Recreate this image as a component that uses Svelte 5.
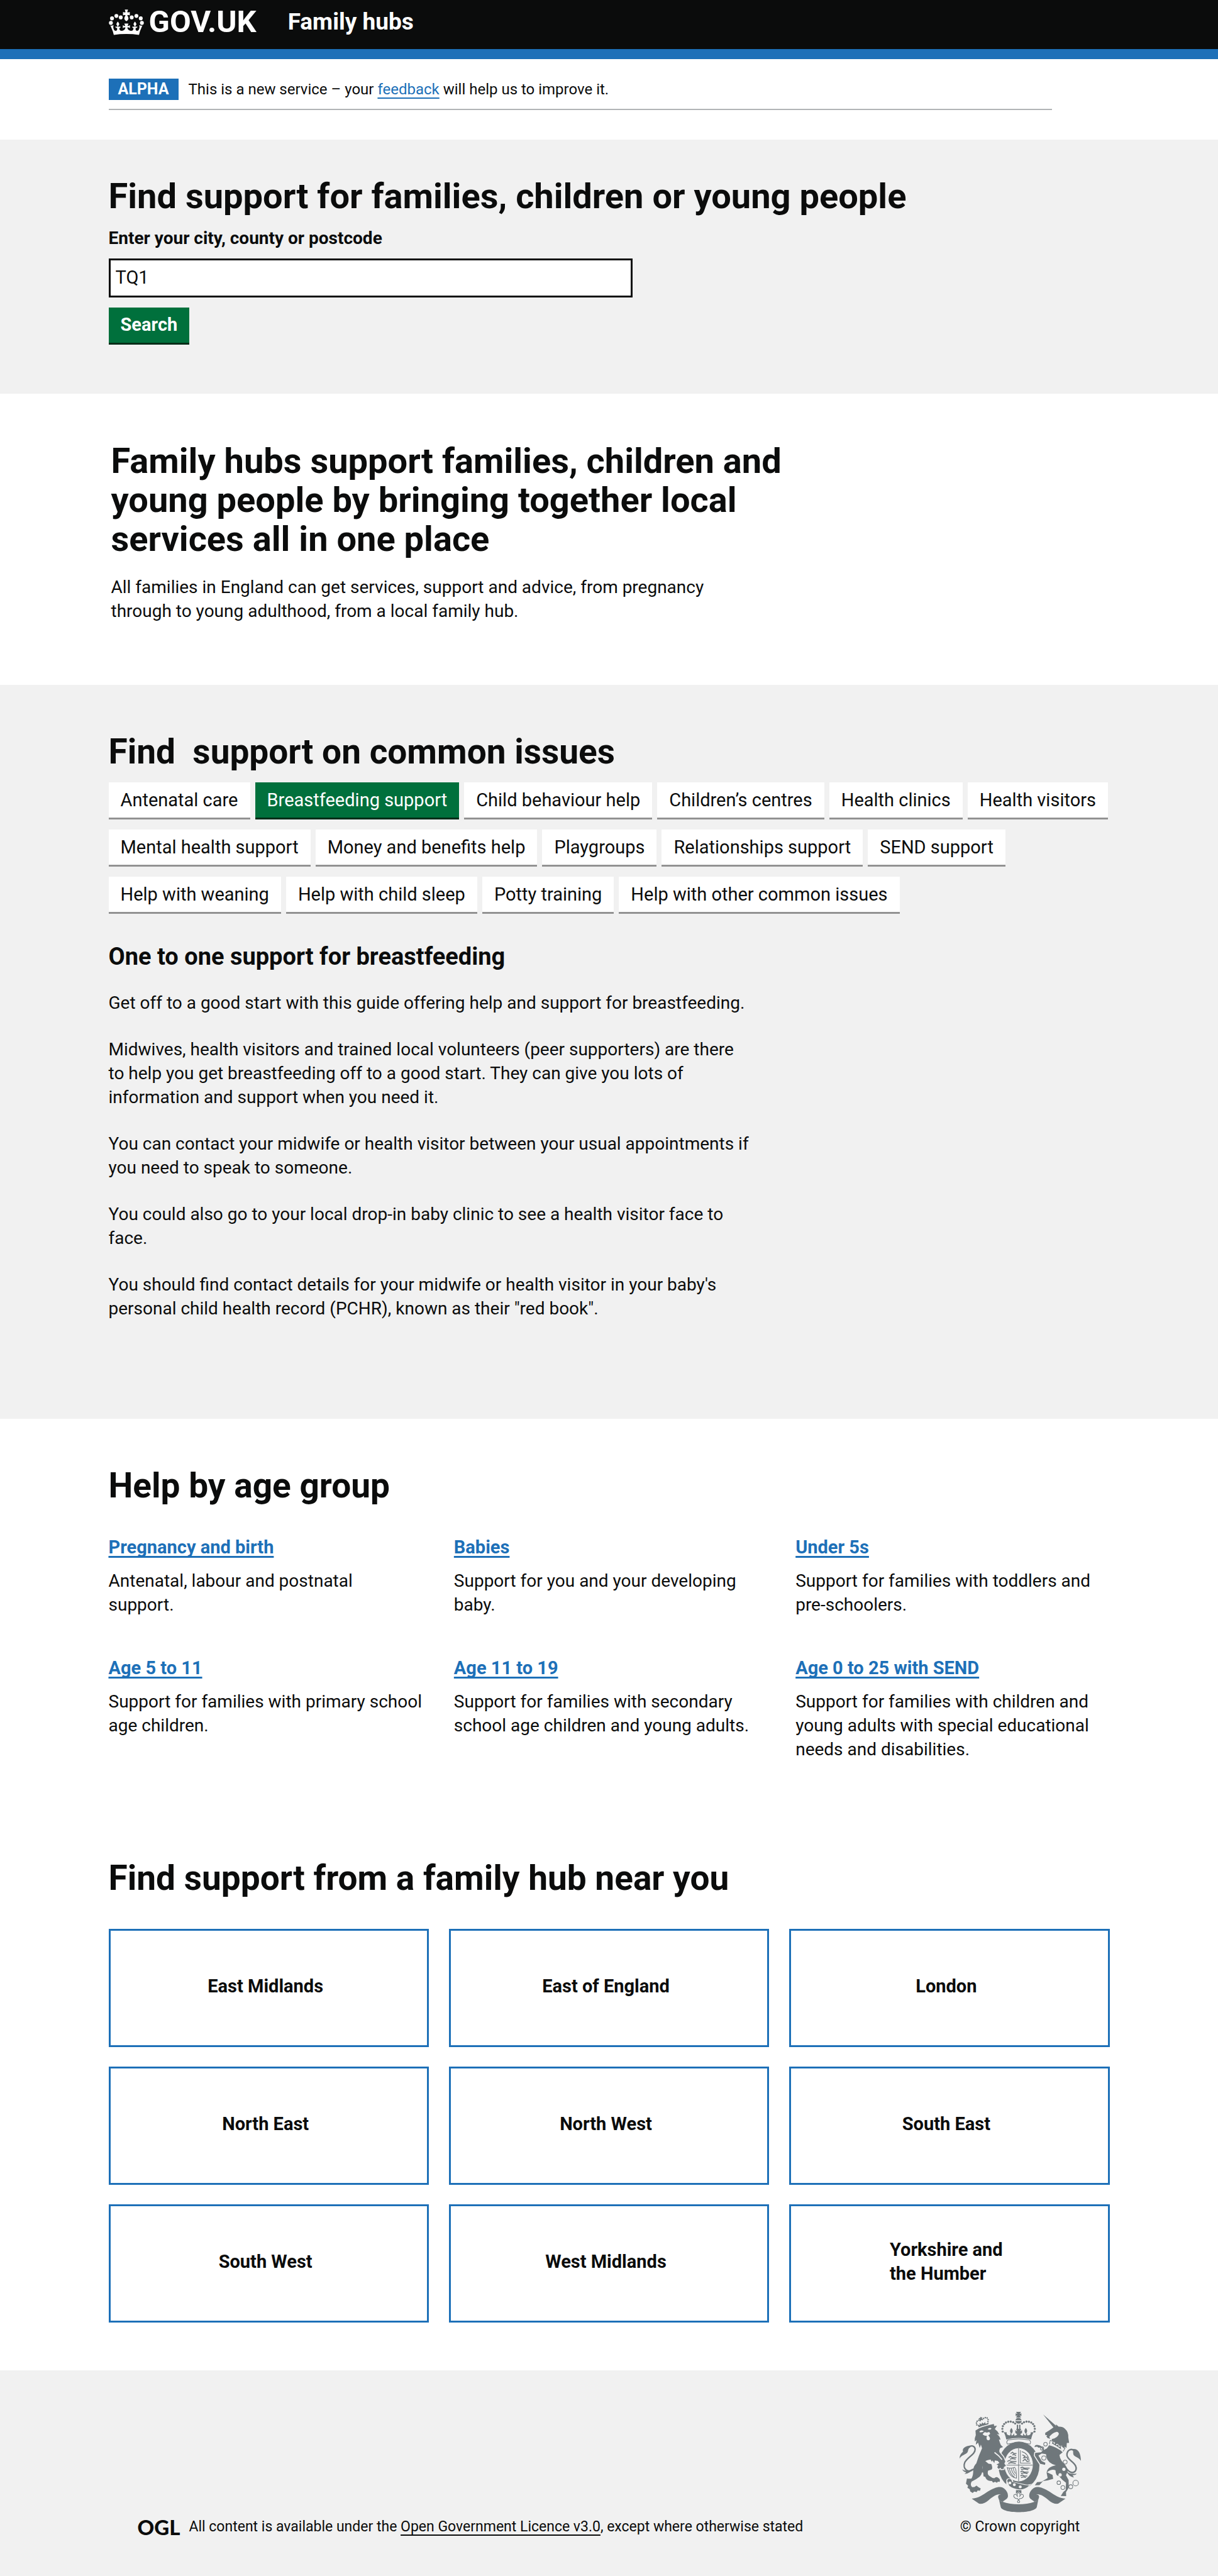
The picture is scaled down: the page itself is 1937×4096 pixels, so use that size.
<script>
  const issues = [
    ['Antenatal care', 'Breastfeeding support', 'Child behaviour help', 'Children’s centres', 'Health clinics', 'Health visitors'],
    ['Mental health support', 'Money and benefits help', 'Playgroups', 'Relationships support', 'SEND support'],
    ['Help with weaning', 'Help with child sleep', 'Potty training', 'Help with other common issues']
  ];

  const ages = [
    ['Pregnancy and birth', 'Antenatal, labour and postnatal\nsupport.'],
    ['Babies', 'Support for you and your developing baby.'],
    ['Under 5s', 'Support for families with toddlers and pre-schoolers.'],
    ['Age 5 to 11', 'Support for families with primary school age children.'],
    ['Age 11 to 19', 'Support for families with secondary school age children and young adults.'],
    ['Age 0 to 25 with SEND', 'Support for families with children and young adults with special educational needs and disabilities.']
  ];

  const regions = [
    ['East Midlands'], ['East of England'], ['London'],
    ['North East'], ['North West'], ['South East'],
    ['South West'], ['West Midlands'], ['Yorkshire and', 'the Humber']
  ];

  let selected = $state('Breastfeeding support');
  let place = $state('TQ1');

  const pearls = [[30, 136], [37, 108], [64, 93], [91, 102], [159, 102], [188, 93], [215, 108], [222, 136]];
  const beads = [
    [366, 204], [364, 187], [367, 171], [375, 158], [386, 149], [400, 144], [415, 143], [430, 147], [442, 155],
    [560, 204], [562, 187], [559, 171], [551, 158], [540, 149], [526, 144], [511, 143], [496, 147], [484, 155]
  ];
  const lionBeads = [[208, 163], [206, 152], [210, 141], [220, 135], [276, 143], [277, 131], [271, 121], [260, 119], [249, 124]];
  const links = [[627, 281, 11], [606, 307, 10], [617, 365, 13], [747, 390, 12], [708, 516, 11], [733, 545, 12], [781, 540, 12], [811, 518, 17]];
</script>

<header class="header">
  <div class="container header-row">
    <a class="logo" href="/">
      <svg class="crown" viewBox="17 54 218 157" aria-hidden="true">
        {#each pearls as [cx, cy]}<circle {cx} {cy} r="12" />{/each}
        <path d="M116 54h20l-5 15q6 4 16-1v22q-10-6-16-1q8 12 8 20q-3 14-13 17q-10-3-13-17q0-8 8-20q-6-5-16 1v-22q10 5 16 1z" />
        {#each ['translate(0 0)', 'translate(252 0) scale(-1 1)'] as transform}
          <path {transform} d="M127 205Q85 205 48 210L42 188L27 152Q37 156 46 149Q42 166 49 178Q58 190 67 182Q71 176 68 168Q58 168 57 160Q64 156 70 162Q71 156 68 151Q58 146 73 128Q88 146 78 151Q75 156 76 162Q82 156 89 160Q91 168 82 168Q82 188 100 185Q118 182 120 165Q112 162 104 169V150Q112 156 119 155L113 140H127Z" />
        {/each}
      </svg>
      <span>GOV.UK</span>
    </a>
    <a class="service" href="/">Family hubs</a>
  </div>
</header>

<div class="container phase">
  <strong class="tag">ALPHA</strong>
  <span>This is a new service – your <a href="/feedback">feedback</a> will help us to improve it.</span>
</div>

<main>
  <section class="band search">
    <form class="container" onsubmit={(e) => e.preventDefault()}>
      <h1>Find support for families, children or young people</h1>
      <label for="place">Enter your city, county or postcode</label>
      <input id="place" type="text" bind:value={place} />
      <button class="submit" type="submit">Search</button>
    </form>
  </section>

  <section class="intro">
    <div class="container intro-text">
      <h2>Family hubs support families, children and young people by bringing together local services all in one place</h2>
      <p>All families in England can get services, support and advice, from pregnancy through to young adulthood, from a local family hub.</p>
    </div>
  </section>

  <section class="band issues">
    <div class="container">
      <h2>Find&nbsp; support on common issues</h2>
      <div class="tabs">
        {#each issues as row}
          <div class="tab-row">
            {#each row as issue}
              <button type="button" class="tab" class:active={issue === selected} aria-pressed={issue === selected} onclick={() => (selected = issue)}>{issue}</button>
            {/each}
          </div>
        {/each}
      </div>
      <article>
        <h3>One to one support for breastfeeding</h3>
        <p>Get off to a good start with this guide offering help and support for breastfeeding.</p>
        <p>Midwives, health visitors and trained local volunteers (peer supporters) are there to help you get breastfeeding off to a good start. They can give you lots of information and support when you need it.</p>
        <p>You can contact your midwife or health visitor between your usual appointments if you need to speak to someone.</p>
        <p>You could also go to your local drop-in baby clinic to see a health visitor face to face.</p>
        <p>You should find contact details for your midwife or health visitor in your baby's personal child health record (PCHR), known as their "red book".</p>
      </article>
    </div>
  </section>

  <section class="container ages">
    <h2>Help by age group</h2>
    <ul class="age-grid">
      {#each ages as [title, text]}
        <li>
          <a href="/age-group">{title}</a>
          <p>{text}</p>
        </li>
      {/each}
    </ul>
  </section>

  <section class="container near">
    <h2>Find support from a family hub near you</h2>
    <ul class="region-grid">
      {#each regions as lines}
        <li>
          <a href="/region"><span>{#each lines as line, i}{#if i}<br />{/if}{line}{/each}</span></a>
        </li>
      {/each}
    </ul>
  </section>
</main>

<footer class="footer">
  <div class="footer-row">
    <div class="licence">
      <span class="ogl">OGL</span>
      <span>All content is available under the <a href="/licence">Open Government Licence v3.0</a>, except where otherwise stated</span>
    </div>
    <a class="copyright" href="/copyright">
      <svg class="crest" viewBox="103 84 740 613" aria-hidden="true">
        <!-- motto ribbon -->
        {#each ['translate(0 0)', 'translate(926 0) scale(-1 1)'] as transform}
          <path {transform} d="M177 613C215 612 245 590 275 570C305 550 335 540 352 542C380 545 401 575 398 600C394 616 378 620 366 632C350 630 340 616 338 602C338 592 345 587 356 586C330 583 305 600 280 622C262 637 245 646 222 644Z" />
        {/each}
        <path d="M339 600C342 622 354 630 366 632C420 652 506 652 560 632C575 630 584 620 587 600L574 664C564 706 362 706 354 664Z" />

        <!-- imperial crown -->
        <path d="M447 84h31l-9 12l11-4v18l-11-5l9 13h-31l9-13l-11 5v-18l11 4zM444 135q3-14 18-15q15 1 19 15zM442 139h41q-6 16-20 17q-14-1-21-17zM452 162h8v30h-8zM466 162h8v30h-8z" />
        {#each beads as [cx, cy]}<circle {cx} {cy} r="6.5" />{/each}
        <path d="M372 207q14 2 18 0q-2 16 14 20q12 2 8-12q10 1 7 12q12 2 14-12q6 4 3 13q12 2 18-8l-11-8v-17l11 8l-6-16h31l-6 16l11-8v17l-11 8q6 10 18 8q-3-9 3-13q2 14 14 12q-3-11 7-12q-4 14 8 12q16-4 14-20q4 2 18 0q-10 16-16 45q-77-18-151 0q-6-29-16-45z" />
        <path d="M419 182q16 20 2 34h-4q-14-14 2-34zM507 182q16 20 2 34h-4q-14-14 2-34z" />
        <path class="line" d="M398 255q65-12 131 0q12 12 4 25q-70-14-138 0q-10-12 3-25z" />

        <!-- garter and shield -->
        <ellipse cx="465" cy="411" rx="125" ry="146" />
        <ellipse class="ground" cx="463" cy="406" rx="87" ry="101" />
        <path class="line" d="M463 306v200M376 409h174" />
        <path class="line" d="M394 424q20 6 45-2q12 14 11 66q-30-4-44-30q-6-14-12-34zM406 428q8 38 32 54M418 428q6 28 24 44M430 426q2 20 14 34M474 318v78h62M482 326q42 10 46 62" />
        <path class="rough" d="M414 338l12-8l8 8h16M424 346l10-2l14 6M402 362l12-6l10 6h26M410 372l14-4l22 4M394 386l12-6l12 6h32M400 398l16-5l30 5M474 426l12-5l12 6h32M478 436l16-4l28 4M474 450l12-5l12 6h26M478 460l16-4l24 4M474 474l12-5l12 6h18M478 484l14-4l16 4M486 346l16 8l-8 10l20-4l6 18M488 384l14-12l12 14l10 2" />
        <path class="ground" d="M388 508q-4-20 22-20q20 2 20 22l74 16q20 4 40-4q-40 40-80 38q-50-4-76-32z" />
        <path d="M394 506q0-14 14-14q14 2 14 18l52 14q26 8 54 8q-26 26-62 24q-38-4-60-22z" />
        <circle class="ground" cx="410" cy="517" r="9" />
        <circle class="ground" cx="437" cy="528" r="9" />
        <circle class="ground" cx="473" cy="541" r="9" />
        <path d="M447 561h33v24l-17-16l-16 16z" />
        <path class="line" d="M463 574q14 12 6 28q6-18 20-14q10 12-6 22q-8 4-13 2l-7 10l-7-10q-5 2-13-2q-16-10-6-22q14-4 20 14q-8-16 6-28z" />
        <circle class="line" cx="463" cy="631" r="7" />

        <!-- lion -->
        {#each lionBeads as [cx, cy]}<circle {cx} {cy} r="4.5" />{/each}
        <path d="M228 114l14 4l-4 7l8 3l-3 8l-9-3l-3 9l-7-3l3-8l-8-2l3-8l7 2zM212 160l14 6l-1-14l11 8l5-12l8 8l10-10l3 12l18-9l-2 19q-32-3-57 12z" />
        <path class="halo" d="M200 198l20-13q40-16 92-27l2 12l17-2l-13 20q18 12 28 34l-16-3q18 12 23 34l-10-1q6 22 12 34l13 12l-18 7q-6 10-4 24q14 18 24 30l12 28l-6 12l10 14l-12 6l-3 13l-14 1l-4-9l-11 8l-9-10l6-12l-11-5l18-10l-10-12l-18-3l-3 16l-11-16l-5 8l-7-14q-20 2-32 10q14 12 20 16l17 2q10 26 1 34l-21 6q-8 22 10 34q14 12 28 12q12-12 24-2q14 8 9 24l-12-1l-5 7l-11-6l-13 5l-7-10q-34 2-40-24l-11-4l-2-22l-8-4q8-22 3-38q6 44-16 66q-22 18-50 30q-10 22 4 34l14-1l12-9l12 10l14 8l-5 14l-14-2l-5 10l-16-3l-9 8l-15-9l-3-14l-14-8l4-14l-13-11l6-32q14 2 28 0q12-24 10-50q2-26 19-42q14-46 35-92l-7-23l-7 21l-10-32l-14 12l4-28l-10 8q-2-22 6-38z" />
        <path class="ground" d="M223 206q10-16 28-4q-12 10-28 4zM274 189q12-12 24-4q-8 12-24 4zM244 222q8-20 24-12l16-4l6 12l-12 10q16 16 8 26q-12 8-18-4q-2-16 4-20q-14 2-28-8z" />
        <path class="gapline" d="M316 331q28 20 46 44" />
        <path class="tail" d="M188 432C155 462 120 430 134 395C146 362 200 345 198 310C194 288 175 288 158 298" />
        <path d="M168 290C135 292 118 308 124 326C110 338 103 350 103 369C112 352 132 346 146 336C160 326 150 308 168 300ZM119 434q12 10 30 8q20 0 32-12q-10 30-48 32q8-5 10-10q-18-2-24-18z" />

        <!-- unicorn -->
        <path d="M612 99L693 170L680 184Z" />
        <path d="M625 212Q648 198 662 188Q674 176 690 175L692 160L707 174Q730 172 745 186Q768 206 766 240L771 273L757 274L755 304L744 296L740 308L726 288L712 292L704 276L690 280L681 264L667 262L665 250Q700 244 709 218Q704 202 692 206Q668 212 650 236L656 248L640 244L632 232L638 226L626 226Z" />
        <path class="line" d="M656 257L650 284M656 257Q700 272 746 306L734 326Q700 298 650 284" />
        <path d="M666 276l6-12l8 16l8-8l6 16l10-6l4 16l12-6l2 20q-24-20-56-36z" />
        <path class="halo" d="M649 287Q700 300 732 330L712 346Q716 378 746 406Q764 430 762 446L752 470L768 500L769 546L752 574L753 598L720 597L736 572L750 560L752 516Q728 500 708 474Q690 476 688 440Q664 430 636 452L670 468L674 492L640 502L612 506L590 530L562 531L576 512L602 510L640 487L634 456Q636 420 690 410Q640 396 632 358L630 342L604 338L584 350L604 384L626 394L624 407L594 400L586 388L562 350L564 334L600 330L612 318L600 300L584 302L576 296L560 298Q562 282 582 286Q606 288 618 316L636 306Z" />
        <path class="tail" d="M756 432C790 474 826 446 810 412C796 384 752 370 758 340C762 314 785 306 802 320" />
        <path d="M792 311C826 306 842 335 843 383C834 365 818 362 804 352C790 342 800 328 792 311ZM752 440q16 28 66 20q-8 12-26 10q6 8 8 14q-36-8-48-44z" />
        {#each links as [cx, cy, r]}<circle class="line" {cx} {cy} {r} />{/each}
        <circle class="ground" cx="739" cy="434" r="10" />
        <circle class="ground" cx="716" cy="468" r="10" />
      </svg>
      <span>© Crown copyright</span>
    </a>
  </div>
</footer>

<style>
  :global(body) {
    margin: 0;
    background: #fff;
    color: #0b0c0c;
    font: 28px/38px Roboto, 'Liberation Sans', Arial, sans-serif;
  }

  h1, h2, h3, p, ul { margin: 0; padding: 0; }
  ul { list-style: none; }
  h1, h2 { font-size: 56px; line-height: 62px; font-weight: 700; }
  a { color: inherit; }
  button, input { font: inherit; color: inherit; border-radius: 0; box-sizing: border-box; }
  button { cursor: pointer; }

  .container { width: min(100% - 64px, 1592px); margin: 0 auto; }
  .band { background: #f1f1f1; }

  .header { background: #0b0c0c; color: #fff; border-bottom: 16px solid #1d70b8; }
  .header-row { display: flex; align-items: center; gap: 50px; height: 70px; padding-bottom: 8px; }
  .header a { text-decoration: none; font-weight: 700; }
  .logo { display: flex; align-items: center; gap: 8px; font-size: 49px; line-height: 70px; }
  .crown { width: 56px; height: 41px; fill: #fff; }
  .service { font-size: 37px; line-height: 70px; }

  .phase { display: flex; align-items: center; gap: 16px; padding: 31px 0 63px; font-size: 24px; line-height: 34px; position: relative; }
  .phase::after { content: ''; position: absolute; left: 0; bottom: 47px; width: 1500px; max-width: 100%; height: 2px; background: #b1b4b6; }
  .phase a { color: #1d70b8; text-underline-offset: 5px; text-decoration-thickness: 2px; }
  .tag { box-sizing: border-box; width: 111px; background: #1d70b8; color: #fff; text-align: center; font-size: 25px; }

  .search { padding: 59px 0 78px; }
  label { display: block; margin-top: 17px; font-weight: 700; }
  input { display: block; width: 833px; max-width: 100%; height: 62px; margin-top: 13px; padding: 0 8px 3px; border: 3px solid #0b0c0c; background: #fff; font-size: 29px; }
  .submit { display: block; margin-top: 16px; height: 59px; padding: 0 19px 2px; border: 0; border-bottom: 3px solid #002d18; background: #00703c; color: #fff; font-size: 29px; font-weight: 700; }

  .intro { padding: 76px 0 98px; }
  .intro-text { box-sizing: border-box; padding-left: 4px; }
  .intro h2 { max-width: 1090px; }
  .intro p { max-width: 1000px; margin-top: 27px; }

  .issues { padding: 75px 0 156px; }
  .tabs { display: flex; flex-direction: column; gap: 16px; margin-top: 18px; }
  .tab-row { display: flex; flex-wrap: wrap; gap: 8px; }
  .tab { height: 59px; padding: 0 19px; border: 0; border-bottom: 3px solid #929292; background: #fff; font-size: 29px; }
  .tab.active { background: #00703c; border-color: #002d18; color: #fff; }
  article { max-width: 1022px; margin-top: 44px; }
  h3 { margin-bottom: 31px; font-size: 38px; line-height: 48px; }
  article p + p { margin-top: 36px; }

  .ages { padding-top: 75px; }
  .issues h2, .ages h2, .near h2 { font-size: 55px; }
  .age-grid { display: grid; grid-template-columns: 549fr 543fr 499fr; row-gap: 62px; margin-top: 48px; }
  .age-grid a { color: #1d70b8; font-size: 29px; font-weight: 700; text-underline-offset: 4px; text-decoration-thickness: 3px; text-decoration-skip-ink: none; }
  .age-grid p { max-width: 502px; margin-top: 15px; white-space: pre-line; }

  .near { padding: 154px 0 76px; }
  .region-grid { display: grid; grid-template-columns: repeat(3, 1fr); gap: 31px 32px; margin-top: 50px; }
  .region-grid a { display: flex; align-items: center; justify-content: center; box-sizing: border-box; height: 188px; padding: 0 10px 6px 0; border: 3px solid #1d70b8; font-size: 29px; font-weight: 700; text-decoration: none; }

  .footer { background: #f1f1f1; padding: 66px 0 65px; font-size: 23px; line-height: 30px; }
  .footer-row { display: flex; justify-content: space-between; align-items: flex-end; width: min(100% - 64px, 1500px); margin: 0 auto; }
  .licence { display: flex; align-items: center; gap: 14px; }
  .licence a { text-underline-offset: 5px; text-decoration-thickness: 2px; }
  .ogl { font: 900 33px/30px Lato, sans-serif; }
  .copyright { display: flex; flex-direction: column; align-items: center; gap: 8px; text-decoration: none; }
  .crest { width: 193px; height: 160px; fill: #6f777b; }
  .crest .line { fill: none; stroke: #6f777b; stroke-width: 4; }
  .crest .rough { fill: none; stroke: #6f777b; stroke-width: 6; }
  .crest .ground { fill: #f1f1f1; }
  .crest .gapline { fill: none; stroke: #f1f1f1; stroke-width: 7; }
  .crest .halo { stroke: #f1f1f1; stroke-width: 12; paint-order: stroke; }
  .crest .tail { fill: none; stroke: #6f777b; stroke-width: 9; }
</style>
